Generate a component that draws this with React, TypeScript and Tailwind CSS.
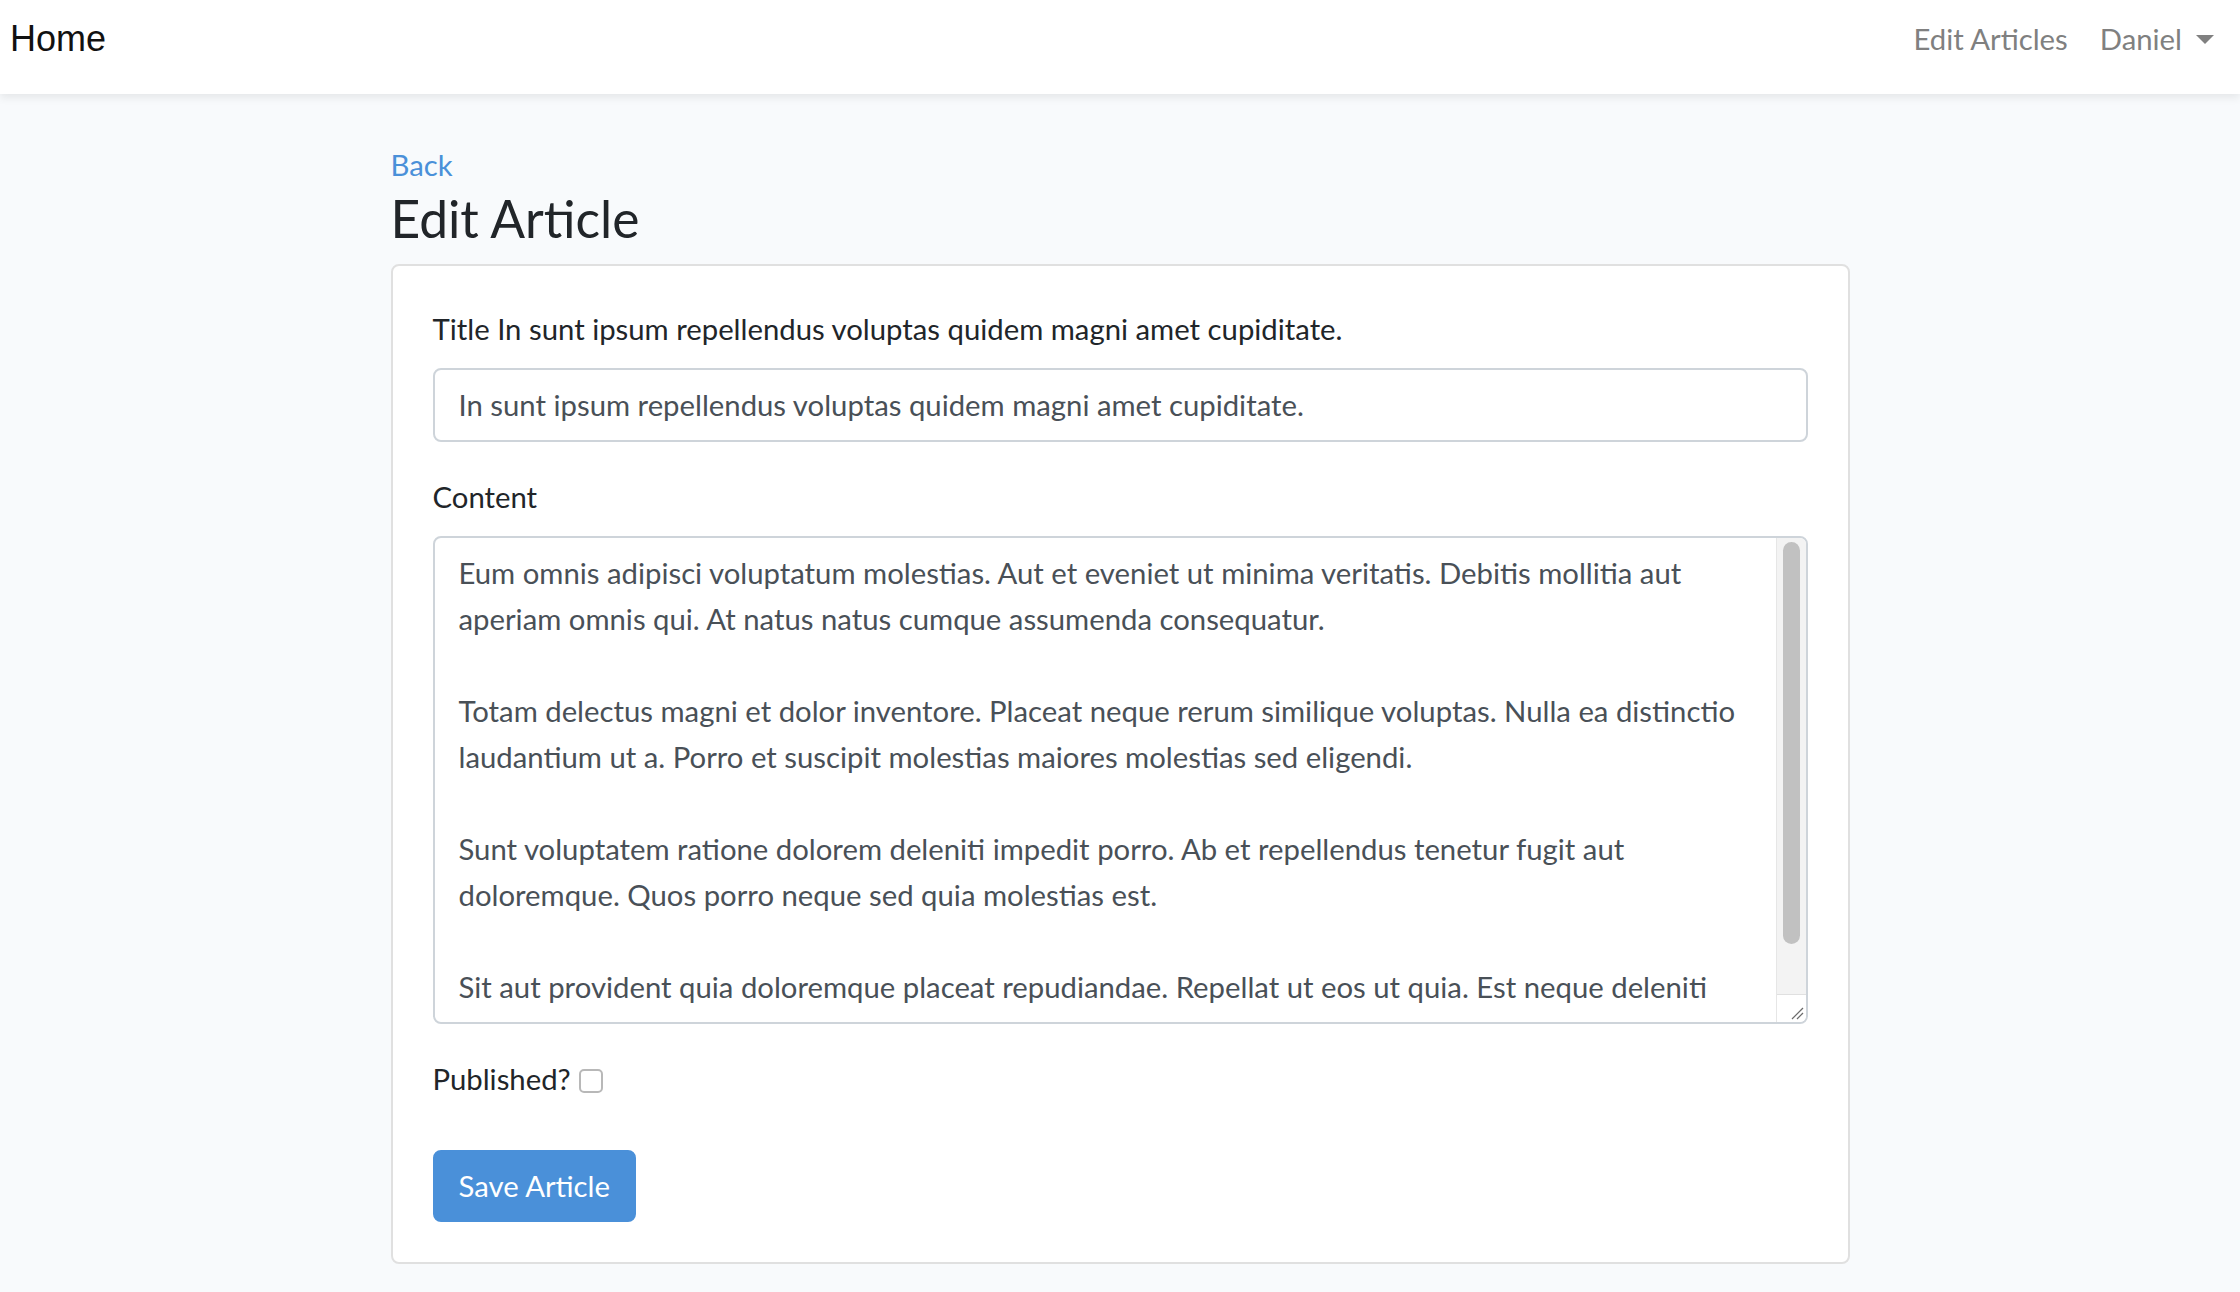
import React from 'react';

const contentLines = [
  'Eum omnis adipisci voluptatum molestias. Aut et eveniet ut minima veritatis. Debitis mollitia aut',
  'aperiam omnis qui. At natus natus cumque assumenda consequatur.',
  '',
  'Totam delectus magni et dolor inventore. Placeat neque rerum similique voluptas. Nulla ea distinctio',
  'laudantium ut a. Porro et suscipit molestias maiores molestias sed eligendi.',
  '',
  'Sunt voluptatem ratione dolorem deleniti impedit porro. Ab et repellendus tenetur fugit aut',
  'doloremque. Quos porro neque sed quia molestias est.',
  '',
  'Sit aut provident quia doloremque placeat repudiandae. Repellat ut eos ut quia. Est neque deleniti',
  'aut neque enim rem.',
];

const title = 'In sunt ipsum repellendus voluptas quidem magni amet cupiditate.';

const Navbar: React.FC = () => (
  <nav className="relative z-10 flex h-[94px] items-center justify-between bg-white pb-[16px] pl-[10px] pr-[10px] shadow-[0_4px_8px_rgba(0,0,0,0.075)]">
    <a className="font-['Liberation_Sans',Arial,sans-serif] text-[36px] leading-none text-[#111]">Home</a>
    <div className="flex items-center text-[29.3px] leading-none text-[#808080]">
      <a className="px-[16px]">Edit Articles</a>
      <a className="flex items-center px-[16px]">
        Daniel
        <span className="ml-[14px] mt-[2px] h-0 w-0 border-x-[9px] border-t-[9px] border-x-transparent border-t-[#808080]" />
      </a>
    </div>
  </nav>
);

const FakeTextarea: React.FC = () => (
  <div className="flex h-[488px] overflow-hidden rounded-[8px] border-2 border-[#ced4da] bg-white">
    <div className="flex-1 overflow-hidden px-[24px] py-[12px] text-[#495057]">
      {contentLines.map((line, i) => (
        <div key={i} className="h-[46px] whitespace-nowrap">
          {line}
        </div>
      ))}
    </div>
    <div className="flex w-[30px] flex-col border-l border-[#e6e6e6]">
      <div className="flex-1 bg-[#f3f3f3] px-[6px] pt-[4px]">
        <div className="h-[402px] rounded-full bg-[#c1c1c1]" />
      </div>
      <div className="flex h-[28px] items-end justify-end border-t border-[#e0e0e0] bg-white pb-[2px] pr-[2px]">
        <svg width="14" height="14" viewBox="0 0 14 14" fill="none" stroke="#6b6b6b" strokeWidth="1.2">
          <path d="M2 13 L13 2" />
          <path d="M7 13 L13 7" />
        </svg>
      </div>
    </div>
  </div>
);

export default function App() {
  return (
    <div className="min-h-[1292px] bg-[#f8fafc] font-['Lato','Noto_Sans',sans-serif] text-[29.3px] leading-[46px] text-[#212529]">
      <Navbar />
      <main className="mx-auto w-[1459px] pt-[48px]">
        <a className="block text-[#4a90d9]">Back</a>
        <h3 className="mb-[16px] text-[51.5px] leading-[60px]">Edit Article</h3>
        <div className="rounded-[8px] border-2 border-[#e0e0e0] bg-white p-[40px]">
          <div className="mb-[32px]">
            <label className="mb-[16px] block">Title {title}</label>
            <div className="flex h-[74px] items-center rounded-[8px] border-2 border-[#ced4da] bg-white px-[24px] text-[#495057]">
              {title}
            </div>
          </div>
          <div className="mb-[32px]">
            <label className="mb-[16px] block">Content</label>
            <FakeTextarea />
          </div>
          <div className="mb-[48px] flex items-center">
            <label>Published?</label>
            <input
              type="checkbox"
              className="ml-[8px] mt-[4px] h-[24px] w-[24px] appearance-none rounded-[5px] border-2 border-[#b8b8b8] bg-white"
            />
          </div>
          <button className="h-[72px] rounded-[8px] border-2 border-[#4a90d9] bg-[#4a90d9] px-[24px] text-white">
            Save Article
          </button>
        </div>
      </main>
    </div>
  );
}
